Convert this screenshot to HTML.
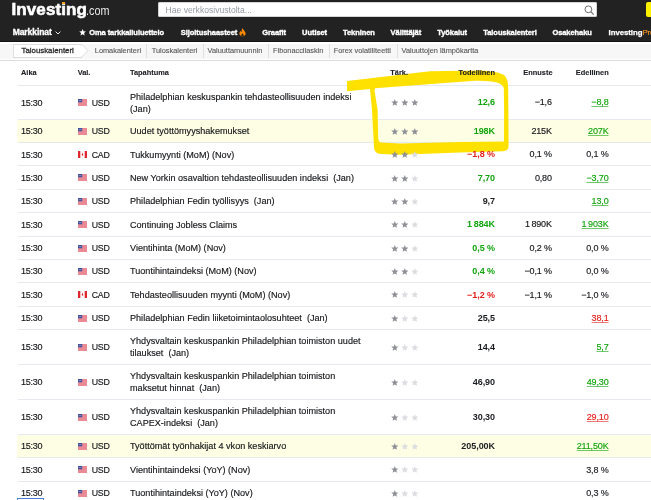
<!DOCTYPE html>
<html><head><meta charset="utf-8">
<style>
html,body{margin:0;padding:0;width:651px;height:500px;overflow:hidden;background:#fff;position:relative;font-family:"Liberation Sans",sans-serif;}
body{will-change:transform;}
div{position:absolute;white-space:nowrap;}
#hdr{left:0;top:0;width:651px;height:41.5px;background:#222222;border-bottom:0.8px solid #121212;box-sizing:border-box;}
.logo{left:11.5px;top:0px;font-size:17px;font-weight:700;color:#fff;letter-spacing:0.1px;line-height:20px;-webkit-text-stroke:0.6px #fff;}
.logo span{display:inline-block;font-weight:400;font-size:13.5px;letter-spacing:0;color:#e8e8e8;-webkit-text-stroke:0;transform:scaleX(0.8);transform-origin:0 0;margin-left:-1.5px}
.search{left:158px;top:2.2px;width:439px;height:15.3px;background:#fff;border-radius:2px;box-shadow:inset 0 0 0 0.8px #c8c8c8;}
.ph{left:165.5px;top:4.5px;font-size:8.6px;color:#949aa3;line-height:11px;}
.nav{top:28px;font-size:7.5px;font-weight:700;color:#fff;line-height:9px;letter-spacing:-0.07px;-webkit-text-stroke:0.35px #fff;}
#sub{left:0;top:41.5px;width:651px;height:18px;background:linear-gradient(#fff 0,#fff 2px,#f7f7f7 2px,#f7f7f7 16.6px,#fff 16.6px);border-bottom:1px solid #dcdcdc;}
.sn{top:46.2px;font-size:7.36px;color:#555;line-height:9px;-webkit-text-stroke:0.1px currentColor;}
.sep{top:44px;width:1px;height:14px;background:#e0e0e0;}
.th{top:69px;font-size:7.4px;font-weight:700;color:#1b1d21;line-height:8px;-webkit-text-stroke:0.1px #1b1d21;}
.line{left:17.5px;width:634px;height:1px;background:#e6e9ee;}
.hl{left:17px;width:634px;background:#fefee4;}
.t{font-size:9.1px;line-height:12px;color:#15171a;-webkit-text-stroke:0.15px currentColor;}
.time{left:21px;font-size:9px;letter-spacing:-0.27px;}
.flagw{left:78px;width:9px;height:7px;}
.flagw svg{display:block}
.cur{left:91.8px;font-size:8.8px;letter-spacing:-0.3px;}
.ev{left:130px;}
.stars{left:391px;width:30px;height:7px;}
.stars svg{display:inline-block;vertical-align:top;margin-right:2.2px}
.act{right:156px;font-weight:700;font-size:9px;letter-spacing:-0.05px;-webkit-text-stroke:0;}
.fc{right:99.2px;font-size:9px;letter-spacing:-0.15px;}
.prev{right:42.5px;font-size:9px;letter-spacing:-0.15px;}
.ul{text-decoration:underline;text-decoration-thickness:0.55px;text-underline-offset:0.9px;text-decoration-skip-ink:none;text-decoration-color:color-mix(in srgb,currentColor 60%,transparent);}
</style></head><body>
<div id="hdr"></div>
<div class="logo">Investing<span>.com</span></div>
<div style="left:62.3px;top:1.6px;width:2.4px;height:2.4px;background:#f7a21b"></div>
<div class="search"></div>
<div class="ph">Hae verkkosivustolta...</div>
<div id="sub"></div>

<div class="nav" style="left:12.7px;font-size:8.5px;top:28.2px">Markkinat</div>
<svg style="position:absolute;left:55px;top:31.2px" width="6" height="4" viewBox="0 0 6 4"><path d="M0.6 0.6 L3 3 L5.4 0.6" stroke="#fff" stroke-width="0.9" fill="none"/></svg>
<svg style="position:absolute;left:78.7px;top:28.8px" width="7.2" height="7" viewBox="0 0 24 23"><path d="M12 0l3.09 7.6 8.18.62-6.27 5.3 1.96 7.98L12 17.2l-6.96 4.3 1.96-7.98L.73 8.22l8.18-.62z" fill="#fff"/></svg>
<div class="nav" style="left:89.2px">Oma tarkkailuluettelo</div>
<div class="nav" style="left:180.8px">Sijoitushaasteet</div>
<svg style="position:absolute;left:238.6px;top:28.3px" width="7" height="8.5" viewBox="0 0 7 8.5"><path d="M3.4 0 C3.8 1.8 6.6 3.2 6.6 5.6 C6.6 7.4 5.2 8.4 3.5 8.4 C1.8 8.4 0.4 7.4 0.4 5.6 C0.4 4.2 1.3 3.3 1.8 2.7 C1.9 3.5 2.2 4 2.6 4.2 C2.6 2.8 2.8 1.2 3.4 0z" fill="#ff8a00"/><path d="M3.5 5.2 C3.9 5.9 4.7 6.5 4.7 7.3 C4.7 8 4.2 8.4 3.5 8.4 C2.8 8.4 2.3 8 2.3 7.3 C2.3 6.5 3.1 5.9 3.5 5.2z" fill="#222"/></svg>
<div class="nav" style="left:262.2px">Graafit</div>
<div class="nav" style="left:302.1px">Uutiset</div>
<div class="nav" style="left:343px">Tekninen</div>
<div class="nav" style="left:390.6px">Välittäjät</div>
<div class="nav" style="left:437.3px">Työkalut</div>
<div class="nav" style="left:483.3px">Talouskalenteri</div>
<div class="nav" style="left:552.4px">Osakehaku</div>
<div class="nav" style="left:608.6px;font-size:7.8px;top:28px;letter-spacing:-0.05px;-webkit-text-stroke:0.25px #fff">Investing<span style="color:#f7931e;-webkit-text-stroke:0.2px #f7931e;font-weight:400">Pro</span></div>
<svg style="position:absolute;left:584px;top:5px" width="11" height="11" viewBox="0 0 11 11"><circle cx="4.4" cy="4.3" r="3.4" stroke="#6b6b6b" stroke-width="1" fill="none"/><path d="M6.9 6.8 L9.8 9.7" stroke="#6b6b6b" stroke-width="1.1"/></svg>
<div style="left:646px;top:2.2px;width:12px;height:14.8px;background:#fff200;border-radius:2px"></div>
<div style="left:13px;top:44.3px;width:69px;height:13.3px;background:#fff;border:1px solid #dedede;border-right:none;box-sizing:border-box"></div>
<svg style="position:absolute;left:81px;top:44.3px" width="8" height="13.3" viewBox="0 0 8 13.3"><path d="M0 0.5 L1 0.5 L6.9 6.65 L1 12.8 L0 12.8 Z" fill="#fff"/><path d="M0 0.5 L1 0.5 L6.9 6.65 L1 12.8 L0 12.8" fill="none" stroke="#dedede" stroke-width="1"/></svg>
<div class="sn" style="left:21.5px;font-size:7.85px;top:45.9px;color:#2a2a2a;-webkit-text-stroke:0.3px #2a2a2a">Talouskalenteri</div>
<div class="sn" style="left:94.8px">Lomakalenteri</div>
<div class="sep" style="left:146px"></div>
<div class="sn" style="left:151.8px">Tuloskalenteri</div>
<div class="sep" style="left:202.5px"></div>
<div class="sn" style="left:207.6px">Valuuttamuunnin</div>
<div class="sep" style="left:267.5px"></div>
<div class="sn" style="left:273px">Fibonaccilaskin</div>
<div class="sep" style="left:328.5px"></div>
<div class="sn" style="left:333.7px">Forex volatiliteetti</div>
<div class="sep" style="left:396.5px"></div>
<div class="sn" style="left:401.6px">Valuuttojen lämpökartta</div>
<div class="line" style="top:118.9px"></div>
<div class="hl" style="top:120.1px;height:22.4px"></div>
<div class="line" style="top:142.1px"></div>
<div class="line" style="top:165.4px"></div>
<div class="line" style="top:188.8px"></div>
<div class="line" style="top:212.0px"></div>
<div class="line" style="top:235.6px"></div>
<div class="line" style="top:258.9px"></div>
<div class="line" style="top:282.3px"></div>
<div class="line" style="top:305.6px"></div>
<div class="line" style="top:329.0px"></div>
<div class="line" style="top:364.0px"></div>
<div class="line" style="top:398.7px"></div>
<div class="line" style="top:433.9px"></div>
<div class="hl" style="top:435.1px;height:22.5px"></div>
<div class="line" style="top:457.2px"></div>
<div class="line" style="top:480.7px"></div>
<div class="line" style="top:504.1px"></div>
<div class="line" style="top:84.5px"></div>
<svg style="position:absolute;left:0;top:0;" width="651" height="500" viewBox="0 0 651 500">
<path fill="#ffe100" fill-rule="evenodd" d="M347 81 L430 71.2 L480 70.6 Q500 71.5 505 76 Q508 79 508.2 88 L508.6 146 Q508.6 151 503 151.3 L460 152.6 L400 154.8 L381 154 Q374 153.5 374 147 L372 110 L370 89 L347 91.2 Z
M375 88.3 L475 80.7 Q502 80 503.8 88 L504.1 110 L504 141.4 L460 141.9 L400 143.5 L381 142.5 Q378.5 142 378.2 138 L377.6 110 L374.6 91 Z"/>
</svg>
<div class="t time" style="top:96.6px">15:30</div>
<div class="flagw" style="top:99.1px"><svg class="flag" width="9" height="7" viewBox="0 0 9 7"><rect width="9" height="7" fill="#f4c6cb"/><rect x="0" y="0.0" width="9" height="0.55" fill="#e05a6a"/><rect x="0" y="1.0" width="9" height="0.55" fill="#e05a6a"/><rect x="0" y="2.0" width="9" height="0.55" fill="#e05a6a"/><rect x="0" y="3.0" width="9" height="0.55" fill="#e05a6a"/><rect x="0" y="4.0" width="9" height="0.55" fill="#e05a6a"/><rect x="0" y="5.0" width="9" height="0.55" fill="#e05a6a"/><rect x="0" y="6.0" width="9" height="0.55" fill="#e05a6a"/><rect x="0" y="0" width="4.2" height="3.3" fill="#45509a"/><rect x="0.6" y="1.3" width="3" height="0.8" fill="#8a93c8"/></svg></div>
<div class="t cur" style="top:96.6px">USD</div>
<div class="t ev" style="top:90.6px">Philadelphian keskuspankin tehdasteollisuuden indeksi<br>(Jan)</div>
<div class="stars" style="top:99.3px"><svg width="7.6" height="7.3" viewBox="0 0 24 23"><path d="M12 0l3.09 7.6 8.18.62-6.27 5.3 1.96 7.98L12 17.2l-6.96 4.3 1.96-7.98L.73 8.22l8.18-.62z" fill="#8e9096"/></svg><svg width="7.6" height="7.3" viewBox="0 0 24 23"><path d="M12 0l3.09 7.6 8.18.62-6.27 5.3 1.96 7.98L12 17.2l-6.96 4.3 1.96-7.98L.73 8.22l8.18-.62z" fill="#8e9096"/></svg><svg width="7.6" height="7.3" viewBox="0 0 24 23"><path d="M12 0l3.09 7.6 8.18.62-6.27 5.3 1.96 7.98L12 17.2l-6.96 4.3 1.96-7.98L.73 8.22l8.18-.62z" fill="#8e9096"/></svg></div>
<div class="t act" style="top:96.4px;color:#11a40d">12,6</div>
<div class="t fc" style="top:96.4px">&minus;1,6</div>
<div class="t prev ul" style="top:96.4px;color:#11a40d">&minus;8,8</div>
<div class="t time" style="top:125.3px">15:30</div>
<div class="flagw" style="top:127.8px"><svg class="flag" width="9" height="7" viewBox="0 0 9 7"><rect width="9" height="7" fill="#f4c6cb"/><rect x="0" y="0.0" width="9" height="0.55" fill="#e05a6a"/><rect x="0" y="1.0" width="9" height="0.55" fill="#e05a6a"/><rect x="0" y="2.0" width="9" height="0.55" fill="#e05a6a"/><rect x="0" y="3.0" width="9" height="0.55" fill="#e05a6a"/><rect x="0" y="4.0" width="9" height="0.55" fill="#e05a6a"/><rect x="0" y="5.0" width="9" height="0.55" fill="#e05a6a"/><rect x="0" y="6.0" width="9" height="0.55" fill="#e05a6a"/><rect x="0" y="0" width="4.2" height="3.3" fill="#45509a"/><rect x="0.6" y="1.3" width="3" height="0.8" fill="#8a93c8"/></svg></div>
<div class="t cur" style="top:125.3px">USD</div>
<div class="t ev" style="top:125.3px">Uudet työttömyyshakemukset</div>
<div class="stars" style="top:128.0px"><svg width="7.6" height="7.3" viewBox="0 0 24 23"><path d="M12 0l3.09 7.6 8.18.62-6.27 5.3 1.96 7.98L12 17.2l-6.96 4.3 1.96-7.98L.73 8.22l8.18-.62z" fill="#8e9096"/></svg><svg width="7.6" height="7.3" viewBox="0 0 24 23"><path d="M12 0l3.09 7.6 8.18.62-6.27 5.3 1.96 7.98L12 17.2l-6.96 4.3 1.96-7.98L.73 8.22l8.18-.62z" fill="#8e9096"/></svg><svg width="7.6" height="7.3" viewBox="0 0 24 23"><path d="M12 0l3.09 7.6 8.18.62-6.27 5.3 1.96 7.98L12 17.2l-6.96 4.3 1.96-7.98L.73 8.22l8.18-.62z" fill="#8e9096"/></svg></div>
<div class="t act" style="top:125.1px;color:#11a40d">198K</div>
<div class="t fc" style="top:125.1px">215K</div>
<div class="t prev ul" style="top:125.1px;color:#11a40d">207K</div>
<div class="t time" style="top:148.6px">15:30</div>
<div class="flagw" style="top:151.1px"><svg class="flag" width="9" height="7" viewBox="0 0 9 7"><rect width="9" height="7" fill="#fff"/><rect x="0" y="0" width="2.3" height="7" fill="#e0272e"/><rect x="6.7" y="0" width="2.3" height="7" fill="#e0272e"/><path d="M4.5 1.6 L5.4 4.3 L4.5 3.9 L3.6 4.3z M3.7 3.2 L5.3 3.2 L4.5 5.2z" fill="#e0272e"/></svg></div>
<div class="t cur" style="top:148.6px">CAD</div>
<div class="t ev" style="top:148.6px">Tukkumyynti (MoM) (Nov)</div>
<div class="stars" style="top:151.2px"><svg width="7.6" height="7.3" viewBox="0 0 24 23"><path d="M12 0l3.09 7.6 8.18.62-6.27 5.3 1.96 7.98L12 17.2l-6.96 4.3 1.96-7.98L.73 8.22l8.18-.62z" fill="#8e9096"/></svg><svg width="7.6" height="7.3" viewBox="0 0 24 23"><path d="M12 0l3.09 7.6 8.18.62-6.27 5.3 1.96 7.98L12 17.2l-6.96 4.3 1.96-7.98L.73 8.22l8.18-.62z" fill="#8e9096"/></svg><svg width="7.6" height="7.3" viewBox="0 0 24 23"><path d="M12 0l3.09 7.6 8.18.62-6.27 5.3 1.96 7.98L12 17.2l-6.96 4.3 1.96-7.98L.73 8.22l8.18-.62z" fill="#dcdde0"/></svg></div>
<div class="t act" style="top:148.4px;color:#e3211b">&minus;1,8 %</div>
<div class="t fc" style="top:148.4px">0,1 %</div>
<div class="t prev" style="top:148.4px;color:#1a1c20">0,1 %</div>
<div class="t time" style="top:171.9px">15:30</div>
<div class="flagw" style="top:174.4px"><svg class="flag" width="9" height="7" viewBox="0 0 9 7"><rect width="9" height="7" fill="#f4c6cb"/><rect x="0" y="0.0" width="9" height="0.55" fill="#e05a6a"/><rect x="0" y="1.0" width="9" height="0.55" fill="#e05a6a"/><rect x="0" y="2.0" width="9" height="0.55" fill="#e05a6a"/><rect x="0" y="3.0" width="9" height="0.55" fill="#e05a6a"/><rect x="0" y="4.0" width="9" height="0.55" fill="#e05a6a"/><rect x="0" y="5.0" width="9" height="0.55" fill="#e05a6a"/><rect x="0" y="6.0" width="9" height="0.55" fill="#e05a6a"/><rect x="0" y="0" width="4.2" height="3.3" fill="#45509a"/><rect x="0.6" y="1.3" width="3" height="0.8" fill="#8a93c8"/></svg></div>
<div class="t cur" style="top:171.9px">USD</div>
<div class="t ev" style="top:171.9px">New Yorkin osavaltion tehdasteollisuuden indeksi&nbsp; (Jan)</div>
<div class="stars" style="top:174.6px"><svg width="7.6" height="7.3" viewBox="0 0 24 23"><path d="M12 0l3.09 7.6 8.18.62-6.27 5.3 1.96 7.98L12 17.2l-6.96 4.3 1.96-7.98L.73 8.22l8.18-.62z" fill="#8e9096"/></svg><svg width="7.6" height="7.3" viewBox="0 0 24 23"><path d="M12 0l3.09 7.6 8.18.62-6.27 5.3 1.96 7.98L12 17.2l-6.96 4.3 1.96-7.98L.73 8.22l8.18-.62z" fill="#8e9096"/></svg><svg width="7.6" height="7.3" viewBox="0 0 24 23"><path d="M12 0l3.09 7.6 8.18.62-6.27 5.3 1.96 7.98L12 17.2l-6.96 4.3 1.96-7.98L.73 8.22l8.18-.62z" fill="#dcdde0"/></svg></div>
<div class="t act" style="top:171.7px;color:#11a40d">7,70</div>
<div class="t fc" style="top:171.7px">0,80</div>
<div class="t prev ul" style="top:171.7px;color:#11a40d">&minus;3,70</div>
<div class="t time" style="top:195.2px">15:30</div>
<div class="flagw" style="top:197.7px"><svg class="flag" width="9" height="7" viewBox="0 0 9 7"><rect width="9" height="7" fill="#f4c6cb"/><rect x="0" y="0.0" width="9" height="0.55" fill="#e05a6a"/><rect x="0" y="1.0" width="9" height="0.55" fill="#e05a6a"/><rect x="0" y="2.0" width="9" height="0.55" fill="#e05a6a"/><rect x="0" y="3.0" width="9" height="0.55" fill="#e05a6a"/><rect x="0" y="4.0" width="9" height="0.55" fill="#e05a6a"/><rect x="0" y="5.0" width="9" height="0.55" fill="#e05a6a"/><rect x="0" y="6.0" width="9" height="0.55" fill="#e05a6a"/><rect x="0" y="0" width="4.2" height="3.3" fill="#45509a"/><rect x="0.6" y="1.3" width="3" height="0.8" fill="#8a93c8"/></svg></div>
<div class="t cur" style="top:195.2px">USD</div>
<div class="t ev" style="top:195.2px">Philadelphian Fedin työllisyys&nbsp; (Jan)</div>
<div class="stars" style="top:197.9px"><svg width="7.6" height="7.3" viewBox="0 0 24 23"><path d="M12 0l3.09 7.6 8.18.62-6.27 5.3 1.96 7.98L12 17.2l-6.96 4.3 1.96-7.98L.73 8.22l8.18-.62z" fill="#8e9096"/></svg><svg width="7.6" height="7.3" viewBox="0 0 24 23"><path d="M12 0l3.09 7.6 8.18.62-6.27 5.3 1.96 7.98L12 17.2l-6.96 4.3 1.96-7.98L.73 8.22l8.18-.62z" fill="#8e9096"/></svg><svg width="7.6" height="7.3" viewBox="0 0 24 23"><path d="M12 0l3.09 7.6 8.18.62-6.27 5.3 1.96 7.98L12 17.2l-6.96 4.3 1.96-7.98L.73 8.22l8.18-.62z" fill="#dcdde0"/></svg></div>
<div class="t act" style="top:195.0px;color:#1a1c20">9,7</div>
<div class="t prev ul" style="top:195.0px;color:#11a40d">13,0</div>
<div class="t time" style="top:218.6px">15:30</div>
<div class="flagw" style="top:221.1px"><svg class="flag" width="9" height="7" viewBox="0 0 9 7"><rect width="9" height="7" fill="#f4c6cb"/><rect x="0" y="0.0" width="9" height="0.55" fill="#e05a6a"/><rect x="0" y="1.0" width="9" height="0.55" fill="#e05a6a"/><rect x="0" y="2.0" width="9" height="0.55" fill="#e05a6a"/><rect x="0" y="3.0" width="9" height="0.55" fill="#e05a6a"/><rect x="0" y="4.0" width="9" height="0.55" fill="#e05a6a"/><rect x="0" y="5.0" width="9" height="0.55" fill="#e05a6a"/><rect x="0" y="6.0" width="9" height="0.55" fill="#e05a6a"/><rect x="0" y="0" width="4.2" height="3.3" fill="#45509a"/><rect x="0.6" y="1.3" width="3" height="0.8" fill="#8a93c8"/></svg></div>
<div class="t cur" style="top:218.6px">USD</div>
<div class="t ev" style="top:218.6px">Continuing Jobless Claims</div>
<div class="stars" style="top:221.3px"><svg width="7.6" height="7.3" viewBox="0 0 24 23"><path d="M12 0l3.09 7.6 8.18.62-6.27 5.3 1.96 7.98L12 17.2l-6.96 4.3 1.96-7.98L.73 8.22l8.18-.62z" fill="#8e9096"/></svg><svg width="7.6" height="7.3" viewBox="0 0 24 23"><path d="M12 0l3.09 7.6 8.18.62-6.27 5.3 1.96 7.98L12 17.2l-6.96 4.3 1.96-7.98L.73 8.22l8.18-.62z" fill="#8e9096"/></svg><svg width="7.6" height="7.3" viewBox="0 0 24 23"><path d="M12 0l3.09 7.6 8.18.62-6.27 5.3 1.96 7.98L12 17.2l-6.96 4.3 1.96-7.98L.73 8.22l8.18-.62z" fill="#dcdde0"/></svg></div>
<div class="t act" style="top:218.4px;color:#11a40d">1&#8239;884K</div>
<div class="t fc" style="top:218.4px">1&#8239;890K</div>
<div class="t prev ul" style="top:218.4px;color:#11a40d">1&#8239;903K</div>
<div class="t time" style="top:242.1px">15:30</div>
<div class="flagw" style="top:244.6px"><svg class="flag" width="9" height="7" viewBox="0 0 9 7"><rect width="9" height="7" fill="#f4c6cb"/><rect x="0" y="0.0" width="9" height="0.55" fill="#e05a6a"/><rect x="0" y="1.0" width="9" height="0.55" fill="#e05a6a"/><rect x="0" y="2.0" width="9" height="0.55" fill="#e05a6a"/><rect x="0" y="3.0" width="9" height="0.55" fill="#e05a6a"/><rect x="0" y="4.0" width="9" height="0.55" fill="#e05a6a"/><rect x="0" y="5.0" width="9" height="0.55" fill="#e05a6a"/><rect x="0" y="6.0" width="9" height="0.55" fill="#e05a6a"/><rect x="0" y="0" width="4.2" height="3.3" fill="#45509a"/><rect x="0.6" y="1.3" width="3" height="0.8" fill="#8a93c8"/></svg></div>
<div class="t cur" style="top:242.1px">USD</div>
<div class="t ev" style="top:242.1px">Vientihinta (MoM) (Nov)</div>
<div class="stars" style="top:244.8px"><svg width="7.6" height="7.3" viewBox="0 0 24 23"><path d="M12 0l3.09 7.6 8.18.62-6.27 5.3 1.96 7.98L12 17.2l-6.96 4.3 1.96-7.98L.73 8.22l8.18-.62z" fill="#8e9096"/></svg><svg width="7.6" height="7.3" viewBox="0 0 24 23"><path d="M12 0l3.09 7.6 8.18.62-6.27 5.3 1.96 7.98L12 17.2l-6.96 4.3 1.96-7.98L.73 8.22l8.18-.62z" fill="#8e9096"/></svg><svg width="7.6" height="7.3" viewBox="0 0 24 23"><path d="M12 0l3.09 7.6 8.18.62-6.27 5.3 1.96 7.98L12 17.2l-6.96 4.3 1.96-7.98L.73 8.22l8.18-.62z" fill="#dcdde0"/></svg></div>
<div class="t act" style="top:241.9px;color:#11a40d">0,5 %</div>
<div class="t fc" style="top:241.9px">0,2 %</div>
<div class="t prev" style="top:241.9px;color:#1a1c20">0,0 %</div>
<div class="t time" style="top:265.4px">15:30</div>
<div class="flagw" style="top:267.9px"><svg class="flag" width="9" height="7" viewBox="0 0 9 7"><rect width="9" height="7" fill="#f4c6cb"/><rect x="0" y="0.0" width="9" height="0.55" fill="#e05a6a"/><rect x="0" y="1.0" width="9" height="0.55" fill="#e05a6a"/><rect x="0" y="2.0" width="9" height="0.55" fill="#e05a6a"/><rect x="0" y="3.0" width="9" height="0.55" fill="#e05a6a"/><rect x="0" y="4.0" width="9" height="0.55" fill="#e05a6a"/><rect x="0" y="5.0" width="9" height="0.55" fill="#e05a6a"/><rect x="0" y="6.0" width="9" height="0.55" fill="#e05a6a"/><rect x="0" y="0" width="4.2" height="3.3" fill="#45509a"/><rect x="0.6" y="1.3" width="3" height="0.8" fill="#8a93c8"/></svg></div>
<div class="t cur" style="top:265.4px">USD</div>
<div class="t ev" style="top:265.4px">Tuontihintaindeksi (MoM) (Nov)</div>
<div class="stars" style="top:268.1px"><svg width="7.6" height="7.3" viewBox="0 0 24 23"><path d="M12 0l3.09 7.6 8.18.62-6.27 5.3 1.96 7.98L12 17.2l-6.96 4.3 1.96-7.98L.73 8.22l8.18-.62z" fill="#8e9096"/></svg><svg width="7.6" height="7.3" viewBox="0 0 24 23"><path d="M12 0l3.09 7.6 8.18.62-6.27 5.3 1.96 7.98L12 17.2l-6.96 4.3 1.96-7.98L.73 8.22l8.18-.62z" fill="#8e9096"/></svg><svg width="7.6" height="7.3" viewBox="0 0 24 23"><path d="M12 0l3.09 7.6 8.18.62-6.27 5.3 1.96 7.98L12 17.2l-6.96 4.3 1.96-7.98L.73 8.22l8.18-.62z" fill="#dcdde0"/></svg></div>
<div class="t act" style="top:265.2px;color:#11a40d">0,4 %</div>
<div class="t fc" style="top:265.2px">&minus;0,1 %</div>
<div class="t prev" style="top:265.2px;color:#1a1c20">0,0 %</div>
<div class="t time" style="top:288.8px">15:30</div>
<div class="flagw" style="top:291.2px"><svg class="flag" width="9" height="7" viewBox="0 0 9 7"><rect width="9" height="7" fill="#fff"/><rect x="0" y="0" width="2.3" height="7" fill="#e0272e"/><rect x="6.7" y="0" width="2.3" height="7" fill="#e0272e"/><path d="M4.5 1.6 L5.4 4.3 L4.5 3.9 L3.6 4.3z M3.7 3.2 L5.3 3.2 L4.5 5.2z" fill="#e0272e"/></svg></div>
<div class="t cur" style="top:288.8px">CAD</div>
<div class="t ev" style="top:288.8px">Tehdasteollisuuden myynti (MoM) (Nov)</div>
<div class="stars" style="top:291.4px"><svg width="7.6" height="7.3" viewBox="0 0 24 23"><path d="M12 0l3.09 7.6 8.18.62-6.27 5.3 1.96 7.98L12 17.2l-6.96 4.3 1.96-7.98L.73 8.22l8.18-.62z" fill="#8e9096"/></svg><svg width="7.6" height="7.3" viewBox="0 0 24 23"><path d="M12 0l3.09 7.6 8.18.62-6.27 5.3 1.96 7.98L12 17.2l-6.96 4.3 1.96-7.98L.73 8.22l8.18-.62z" fill="#dcdde0"/></svg><svg width="7.6" height="7.3" viewBox="0 0 24 23"><path d="M12 0l3.09 7.6 8.18.62-6.27 5.3 1.96 7.98L12 17.2l-6.96 4.3 1.96-7.98L.73 8.22l8.18-.62z" fill="#dcdde0"/></svg></div>
<div class="t act" style="top:288.6px;color:#e3211b">&minus;1,2 %</div>
<div class="t fc" style="top:288.6px">&minus;1,1 %</div>
<div class="t prev" style="top:288.6px;color:#1a1c20">&minus;1,0 %</div>
<div class="t time" style="top:312.1px">15:30</div>
<div class="flagw" style="top:314.6px"><svg class="flag" width="9" height="7" viewBox="0 0 9 7"><rect width="9" height="7" fill="#f4c6cb"/><rect x="0" y="0.0" width="9" height="0.55" fill="#e05a6a"/><rect x="0" y="1.0" width="9" height="0.55" fill="#e05a6a"/><rect x="0" y="2.0" width="9" height="0.55" fill="#e05a6a"/><rect x="0" y="3.0" width="9" height="0.55" fill="#e05a6a"/><rect x="0" y="4.0" width="9" height="0.55" fill="#e05a6a"/><rect x="0" y="5.0" width="9" height="0.55" fill="#e05a6a"/><rect x="0" y="6.0" width="9" height="0.55" fill="#e05a6a"/><rect x="0" y="0" width="4.2" height="3.3" fill="#45509a"/><rect x="0.6" y="1.3" width="3" height="0.8" fill="#8a93c8"/></svg></div>
<div class="t cur" style="top:312.1px">USD</div>
<div class="t ev" style="top:312.1px">Philadelphian Fedin liiketoimintaolosuhteet&nbsp; (Jan)</div>
<div class="stars" style="top:314.8px"><svg width="7.6" height="7.3" viewBox="0 0 24 23"><path d="M12 0l3.09 7.6 8.18.62-6.27 5.3 1.96 7.98L12 17.2l-6.96 4.3 1.96-7.98L.73 8.22l8.18-.62z" fill="#8e9096"/></svg><svg width="7.6" height="7.3" viewBox="0 0 24 23"><path d="M12 0l3.09 7.6 8.18.62-6.27 5.3 1.96 7.98L12 17.2l-6.96 4.3 1.96-7.98L.73 8.22l8.18-.62z" fill="#dcdde0"/></svg><svg width="7.6" height="7.3" viewBox="0 0 24 23"><path d="M12 0l3.09 7.6 8.18.62-6.27 5.3 1.96 7.98L12 17.2l-6.96 4.3 1.96-7.98L.73 8.22l8.18-.62z" fill="#dcdde0"/></svg></div>
<div class="t act" style="top:311.9px;color:#1a1c20">25,5</div>
<div class="t prev ul" style="top:311.9px;color:#e3211b">38,1</div>
<div class="t time" style="top:341.3px">15:30</div>
<div class="flagw" style="top:343.8px"><svg class="flag" width="9" height="7" viewBox="0 0 9 7"><rect width="9" height="7" fill="#f4c6cb"/><rect x="0" y="0.0" width="9" height="0.55" fill="#e05a6a"/><rect x="0" y="1.0" width="9" height="0.55" fill="#e05a6a"/><rect x="0" y="2.0" width="9" height="0.55" fill="#e05a6a"/><rect x="0" y="3.0" width="9" height="0.55" fill="#e05a6a"/><rect x="0" y="4.0" width="9" height="0.55" fill="#e05a6a"/><rect x="0" y="5.0" width="9" height="0.55" fill="#e05a6a"/><rect x="0" y="6.0" width="9" height="0.55" fill="#e05a6a"/><rect x="0" y="0" width="4.2" height="3.3" fill="#45509a"/><rect x="0.6" y="1.3" width="3" height="0.8" fill="#8a93c8"/></svg></div>
<div class="t cur" style="top:341.3px">USD</div>
<div class="t ev" style="top:335.3px">Yhdysvaltain keskuspankin Philadelphian toimiston uudet<br>tilaukset&nbsp; (Jan)</div>
<div class="stars" style="top:344.0px"><svg width="7.6" height="7.3" viewBox="0 0 24 23"><path d="M12 0l3.09 7.6 8.18.62-6.27 5.3 1.96 7.98L12 17.2l-6.96 4.3 1.96-7.98L.73 8.22l8.18-.62z" fill="#8e9096"/></svg><svg width="7.6" height="7.3" viewBox="0 0 24 23"><path d="M12 0l3.09 7.6 8.18.62-6.27 5.3 1.96 7.98L12 17.2l-6.96 4.3 1.96-7.98L.73 8.22l8.18-.62z" fill="#dcdde0"/></svg><svg width="7.6" height="7.3" viewBox="0 0 24 23"><path d="M12 0l3.09 7.6 8.18.62-6.27 5.3 1.96 7.98L12 17.2l-6.96 4.3 1.96-7.98L.73 8.22l8.18-.62z" fill="#dcdde0"/></svg></div>
<div class="t act" style="top:341.1px;color:#1a1c20">14,4</div>
<div class="t prev ul" style="top:341.1px;color:#11a40d">5,7</div>
<div class="t time" style="top:376.1px">15:30</div>
<div class="flagw" style="top:378.6px"><svg class="flag" width="9" height="7" viewBox="0 0 9 7"><rect width="9" height="7" fill="#f4c6cb"/><rect x="0" y="0.0" width="9" height="0.55" fill="#e05a6a"/><rect x="0" y="1.0" width="9" height="0.55" fill="#e05a6a"/><rect x="0" y="2.0" width="9" height="0.55" fill="#e05a6a"/><rect x="0" y="3.0" width="9" height="0.55" fill="#e05a6a"/><rect x="0" y="4.0" width="9" height="0.55" fill="#e05a6a"/><rect x="0" y="5.0" width="9" height="0.55" fill="#e05a6a"/><rect x="0" y="6.0" width="9" height="0.55" fill="#e05a6a"/><rect x="0" y="0" width="4.2" height="3.3" fill="#45509a"/><rect x="0.6" y="1.3" width="3" height="0.8" fill="#8a93c8"/></svg></div>
<div class="t cur" style="top:376.1px">USD</div>
<div class="t ev" style="top:370.1px">Yhdysvaltain keskuspankin Philadelphian toimiston<br>maksetut hinnat&nbsp; (Jan)</div>
<div class="stars" style="top:378.8px"><svg width="7.6" height="7.3" viewBox="0 0 24 23"><path d="M12 0l3.09 7.6 8.18.62-6.27 5.3 1.96 7.98L12 17.2l-6.96 4.3 1.96-7.98L.73 8.22l8.18-.62z" fill="#8e9096"/></svg><svg width="7.6" height="7.3" viewBox="0 0 24 23"><path d="M12 0l3.09 7.6 8.18.62-6.27 5.3 1.96 7.98L12 17.2l-6.96 4.3 1.96-7.98L.73 8.22l8.18-.62z" fill="#dcdde0"/></svg><svg width="7.6" height="7.3" viewBox="0 0 24 23"><path d="M12 0l3.09 7.6 8.18.62-6.27 5.3 1.96 7.98L12 17.2l-6.96 4.3 1.96-7.98L.73 8.22l8.18-.62z" fill="#dcdde0"/></svg></div>
<div class="t act" style="top:375.9px;color:#1a1c20">46,90</div>
<div class="t prev ul" style="top:375.9px;color:#11a40d">49,30</div>
<div class="t time" style="top:411.1px">15:30</div>
<div class="flagw" style="top:413.6px"><svg class="flag" width="9" height="7" viewBox="0 0 9 7"><rect width="9" height="7" fill="#f4c6cb"/><rect x="0" y="0.0" width="9" height="0.55" fill="#e05a6a"/><rect x="0" y="1.0" width="9" height="0.55" fill="#e05a6a"/><rect x="0" y="2.0" width="9" height="0.55" fill="#e05a6a"/><rect x="0" y="3.0" width="9" height="0.55" fill="#e05a6a"/><rect x="0" y="4.0" width="9" height="0.55" fill="#e05a6a"/><rect x="0" y="5.0" width="9" height="0.55" fill="#e05a6a"/><rect x="0" y="6.0" width="9" height="0.55" fill="#e05a6a"/><rect x="0" y="0" width="4.2" height="3.3" fill="#45509a"/><rect x="0.6" y="1.3" width="3" height="0.8" fill="#8a93c8"/></svg></div>
<div class="t cur" style="top:411.1px">USD</div>
<div class="t ev" style="top:405.1px">Yhdysvaltain keskuspankin Philadelphian toimiston<br>CAPEX-indeksi&nbsp; (Jan)</div>
<div class="stars" style="top:413.8px"><svg width="7.6" height="7.3" viewBox="0 0 24 23"><path d="M12 0l3.09 7.6 8.18.62-6.27 5.3 1.96 7.98L12 17.2l-6.96 4.3 1.96-7.98L.73 8.22l8.18-.62z" fill="#8e9096"/></svg><svg width="7.6" height="7.3" viewBox="0 0 24 23"><path d="M12 0l3.09 7.6 8.18.62-6.27 5.3 1.96 7.98L12 17.2l-6.96 4.3 1.96-7.98L.73 8.22l8.18-.62z" fill="#dcdde0"/></svg><svg width="7.6" height="7.3" viewBox="0 0 24 23"><path d="M12 0l3.09 7.6 8.18.62-6.27 5.3 1.96 7.98L12 17.2l-6.96 4.3 1.96-7.98L.73 8.22l8.18-.62z" fill="#dcdde0"/></svg></div>
<div class="t act" style="top:410.9px;color:#1a1c20">30,30</div>
<div class="t prev ul" style="top:410.9px;color:#e3211b">29,10</div>
<div class="t time" style="top:440.4px">15:30</div>
<div class="flagw" style="top:442.9px"><svg class="flag" width="9" height="7" viewBox="0 0 9 7"><rect width="9" height="7" fill="#f4c6cb"/><rect x="0" y="0.0" width="9" height="0.55" fill="#e05a6a"/><rect x="0" y="1.0" width="9" height="0.55" fill="#e05a6a"/><rect x="0" y="2.0" width="9" height="0.55" fill="#e05a6a"/><rect x="0" y="3.0" width="9" height="0.55" fill="#e05a6a"/><rect x="0" y="4.0" width="9" height="0.55" fill="#e05a6a"/><rect x="0" y="5.0" width="9" height="0.55" fill="#e05a6a"/><rect x="0" y="6.0" width="9" height="0.55" fill="#e05a6a"/><rect x="0" y="0" width="4.2" height="3.3" fill="#45509a"/><rect x="0.6" y="1.3" width="3" height="0.8" fill="#8a93c8"/></svg></div>
<div class="t cur" style="top:440.4px">USD</div>
<div class="t ev" style="top:440.4px">Työttömät työnhakijat 4 vkon keskiarvo</div>
<div class="stars" style="top:443.1px"><svg width="7.6" height="7.3" viewBox="0 0 24 23"><path d="M12 0l3.09 7.6 8.18.62-6.27 5.3 1.96 7.98L12 17.2l-6.96 4.3 1.96-7.98L.73 8.22l8.18-.62z" fill="#8e9096"/></svg><svg width="7.6" height="7.3" viewBox="0 0 24 23"><path d="M12 0l3.09 7.6 8.18.62-6.27 5.3 1.96 7.98L12 17.2l-6.96 4.3 1.96-7.98L.73 8.22l8.18-.62z" fill="#dcdde0"/></svg><svg width="7.6" height="7.3" viewBox="0 0 24 23"><path d="M12 0l3.09 7.6 8.18.62-6.27 5.3 1.96 7.98L12 17.2l-6.96 4.3 1.96-7.98L.73 8.22l8.18-.62z" fill="#dcdde0"/></svg></div>
<div class="t act" style="top:440.2px;color:#1a1c20">205,00K</div>
<div class="t prev ul" style="top:440.2px;color:#11a40d">211,50K</div>
<div class="t time" style="top:463.8px">15:30</div>
<div class="flagw" style="top:466.2px"><svg class="flag" width="9" height="7" viewBox="0 0 9 7"><rect width="9" height="7" fill="#f4c6cb"/><rect x="0" y="0.0" width="9" height="0.55" fill="#e05a6a"/><rect x="0" y="1.0" width="9" height="0.55" fill="#e05a6a"/><rect x="0" y="2.0" width="9" height="0.55" fill="#e05a6a"/><rect x="0" y="3.0" width="9" height="0.55" fill="#e05a6a"/><rect x="0" y="4.0" width="9" height="0.55" fill="#e05a6a"/><rect x="0" y="5.0" width="9" height="0.55" fill="#e05a6a"/><rect x="0" y="6.0" width="9" height="0.55" fill="#e05a6a"/><rect x="0" y="0" width="4.2" height="3.3" fill="#45509a"/><rect x="0.6" y="1.3" width="3" height="0.8" fill="#8a93c8"/></svg></div>
<div class="t cur" style="top:463.8px">USD</div>
<div class="t ev" style="top:463.8px">Vientihintaindeksi (YoY) (Nov)</div>
<div class="stars" style="top:466.4px"><svg width="7.6" height="7.3" viewBox="0 0 24 23"><path d="M12 0l3.09 7.6 8.18.62-6.27 5.3 1.96 7.98L12 17.2l-6.96 4.3 1.96-7.98L.73 8.22l8.18-.62z" fill="#8e9096"/></svg><svg width="7.6" height="7.3" viewBox="0 0 24 23"><path d="M12 0l3.09 7.6 8.18.62-6.27 5.3 1.96 7.98L12 17.2l-6.96 4.3 1.96-7.98L.73 8.22l8.18-.62z" fill="#dcdde0"/></svg><svg width="7.6" height="7.3" viewBox="0 0 24 23"><path d="M12 0l3.09 7.6 8.18.62-6.27 5.3 1.96 7.98L12 17.2l-6.96 4.3 1.96-7.98L.73 8.22l8.18-.62z" fill="#dcdde0"/></svg></div>
<div class="t prev" style="top:463.6px;color:#1a1c20">3,8 %</div>
<div class="t time" style="top:487.2px">15:30</div>
<div class="flagw" style="top:489.7px"><svg class="flag" width="9" height="7" viewBox="0 0 9 7"><rect width="9" height="7" fill="#f4c6cb"/><rect x="0" y="0.0" width="9" height="0.55" fill="#e05a6a"/><rect x="0" y="1.0" width="9" height="0.55" fill="#e05a6a"/><rect x="0" y="2.0" width="9" height="0.55" fill="#e05a6a"/><rect x="0" y="3.0" width="9" height="0.55" fill="#e05a6a"/><rect x="0" y="4.0" width="9" height="0.55" fill="#e05a6a"/><rect x="0" y="5.0" width="9" height="0.55" fill="#e05a6a"/><rect x="0" y="6.0" width="9" height="0.55" fill="#e05a6a"/><rect x="0" y="0" width="4.2" height="3.3" fill="#45509a"/><rect x="0.6" y="1.3" width="3" height="0.8" fill="#8a93c8"/></svg></div>
<div class="t cur" style="top:487.2px">USD</div>
<div class="t ev" style="top:487.2px">Tuontihintaindeksi (YoY) (Nov)</div>
<div class="stars" style="top:489.9px"><svg width="7.6" height="7.3" viewBox="0 0 24 23"><path d="M12 0l3.09 7.6 8.18.62-6.27 5.3 1.96 7.98L12 17.2l-6.96 4.3 1.96-7.98L.73 8.22l8.18-.62z" fill="#8e9096"/></svg><svg width="7.6" height="7.3" viewBox="0 0 24 23"><path d="M12 0l3.09 7.6 8.18.62-6.27 5.3 1.96 7.98L12 17.2l-6.96 4.3 1.96-7.98L.73 8.22l8.18-.62z" fill="#dcdde0"/></svg><svg width="7.6" height="7.3" viewBox="0 0 24 23"><path d="M12 0l3.09 7.6 8.18.62-6.27 5.3 1.96 7.98L12 17.2l-6.96 4.3 1.96-7.98L.73 8.22l8.18-.62z" fill="#dcdde0"/></svg></div>
<div class="t prev" style="top:487.0px;color:#1a1c20">0,3 %</div>
<div class="th" style="left:21px">Aika</div>
<div class="th" style="left:77.7px">Val.</div>
<div class="th" style="left:130px">Tapahtuma</div>
<div class="th" style="left:390.3px">Tärk.</div>
<div class="th" style="right:156px">Todellinen</div>
<div class="th" style="right:98.5px">Ennuste</div>
<div class="th" style="right:42.3px">Edellinen</div>


<div style="left:17px;top:498.4px;width:27px;height:6px;border:1px solid #4a7fd6;box-sizing:border-box"></div>
</body></html>
